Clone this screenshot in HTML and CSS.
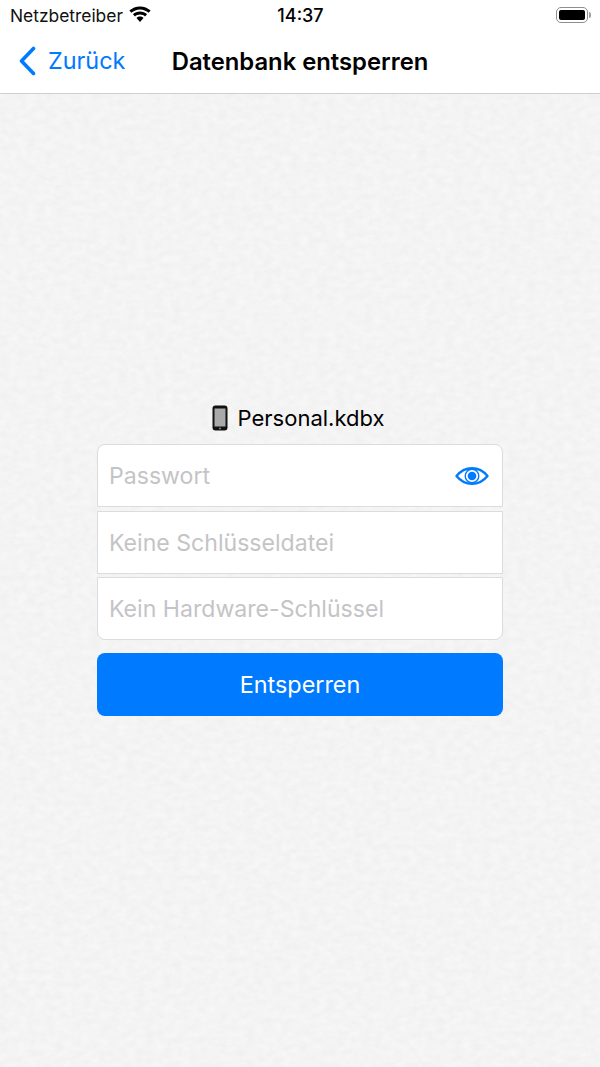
FILE: index.html
```html
<!DOCTYPE html>
<html lang="de">
<head>
    <meta charset="UTF-8">
    <meta name="viewport" content="width=device-width, initial-scale=1.0">
    <title>Datenbank entsperren</title>
    <link rel="stylesheet" href="styles.css">
</head>
<body>
    <header class="top-bar">
        <div class="status-bar">
            <div class="carrier">
                <span>Netzbetreiber</span>
                <svg class="wifi" width="24" height="17" viewBox="0 0 24 17">
                    <path d="M12 3.400c3.300 0 6.300 1.300 8.600 3.400l2.100-2.200C19.800 1.900 16.100.4 12 .4S4.200 1.900 1.300 4.600l2.100 2.200C5.700 4.700 8.700 3.400 12 3.400z"/>
                    <path d="M12 8.500c1.900 0 3.700.7 5 1.900l2.100-2.200C17.200 6.500 14.700 5.500 12 5.500S6.800 6.500 4.900 8.200L7 10.400c1.300-1.200 3.100-1.900 5-1.900z"/>
                    <path d="M12 10.600c-1.300 0-2.500.5-3.500 1.300L12 16l3.500-4.100c-1-.8-2.200-1.300-3.500-1.300z"/>
                </svg>
            </div>
            <div class="clock">14:37</div>
            <div class="battery">
                <div class="battery-body"><div class="battery-fill"></div></div>
                <div class="battery-cap"></div>
            </div>
        </div>
        <nav class="nav-bar">
            <a class="back" href="#">
                <svg width="18" height="30" viewBox="0 0 18 30">
                    <path d="M15.500 2.500 3.500 15l12 12.500" fill="none" stroke="#007aff" stroke-width="3.600" stroke-linecap="round" stroke-linejoin="round"/>
                </svg>
                <span>Zurück</span>
            </a>
            <h1 class="nav-title">Datenbank entsperren</h1>
        </nav>
    </header>

    <main class="content">
        <!-- paper texture behind the form -->
        <svg class="paper" width="100%" height="100%">
            <filter id="paper-noise" x="0" y="0" width="100%" height="100%" color-interpolation-filters="sRGB">
                <feTurbulence type="fractalNoise" baseFrequency="0.11 0.16" numOctaves="3" seed="4"/>
                <feColorMatrix type="matrix" values="0.04 0 0 0 0.935  0.04 0 0 0 0.935  0.04 0 0 0 0.935  0 0 0 0 1"/>
            </filter>
            <rect width="100%" height="100%" filter="url(#paper-noise)"/>
        </svg>
        <div class="unlock-form">
            <div class="db-name">
                <svg class="phone" width="16" height="26" viewBox="0 0 16 26">
                    <rect x="0.500" y="0.500" width="15" height="25" rx="3" fill="#111"/>
                    <rect x="2.500" y="3.500" width="11" height="18" fill="#a9a9a9"/>
                    <circle cx="8" cy="23.600" r="1" fill="#888"/>
                </svg>
                <span>Personal.kdbx</span>
            </div>
            <div class="field field-first">
                <span class="placeholder">Passwort</span>
                <svg class="eye" width="34" height="18" viewBox="0 0 34 18">
                    <path d="M1.500 9C5.500 4 11 1.200 17 1.200S28.500 4 32.500 9C28.500 14 23 16.800 17 16.800S5.500 14 1.500 9z" fill="none" stroke="#007aff" stroke-width="2.400" stroke-linejoin="round"/>
                    <circle cx="17" cy="9" r="6.800" fill="none" stroke="#007aff" stroke-width="1.400"/>
                    <circle cx="17" cy="9" r="4.300" fill="#007aff"/>
                </svg>
            </div>
            <div class="field">
                <span class="placeholder">Keine Schlüsseldatei</span>
            </div>
            <div class="field field-last">
                <span class="placeholder">Kein Hardware-Schlüssel</span>
            </div>
            <button class="unlock-btn">Entsperren</button>
        </div>
    </main>
</body>
</html>
```

FILE: styles.css
```css
html, body {
    margin: 0;
    padding: 0;
    height: 100%;
    font-family: 'Inter', 'Liberation Sans', sans-serif;
}
body {
    display: flex;
    flex-direction: column;
    background-color: #f4f4f4;
    color: #000;
}
.top-bar {
    background-color: #fff;
    border-bottom: 1px solid #cfcfcf;
    height: 93px;
    box-sizing: content-box;
}
.status-bar {
    height: 30px;
    padding: 0 9px 0 10px;
    display: grid;
    grid-template-columns: 1fr auto 1fr;
    align-items: center;
    font-size: 17.400px;
}
.carrier {
    display: flex;
    align-items: center;
    gap: 5px;
    color: #111;
}
.wifi {
    margin-top: -2px;
}
.clock {
    font-size: 18px;
    font-weight: 500;
}
.battery {
    display: flex;
    align-items: center;
    justify-content: flex-end;
}
.battery-body {
    width: 32px;
    height: 16px;
    box-sizing: border-box;
    border: 1px solid #8e8e8e;
    border-radius: 5px;
    padding: 2px;
}
.battery-fill {
    height: 100%;
    background-color: #000;
    border-radius: 2px;
}
.battery-cap {
    width: 2px;
    height: 6px;
    margin-left: 1px;
    background-color: #a0a0a0;
    border-radius: 0 2px 2px 0;
}
.nav-bar {
    height: 63px;
    position: relative;
    display: flex;
    align-items: center;
    justify-content: center;
}
.back {
    position: absolute;
    left: 18px;
    top: 16px;
    display: flex;
    align-items: center;
    gap: 12px;
    color: #007aff;
    text-decoration: none;
    font-size: 23.400px;
    line-height: 30px;
}
.nav-title {
    margin: 0;
    font-size: 23.800px;
    font-weight: 600;
}
.content {
    flex: 1;
    position: relative;
    display: flex;
    flex-direction: column;
    align-items: center;
    padding-top: 310px;
}
.paper {
    position: absolute;
    top: 0;
    left: 0;
}
.unlock-form {
    position: relative;
    width: 406px;
    display: flex;
    flex-direction: column;
}
.db-name {
    height: 28px;
    margin-bottom: 12px;
    padding-right: 4px;
    display: flex;
    align-items: center;
    justify-content: center;
    gap: 10px;
    font-size: 22px;
}
.field {
    height: 63px;
    box-sizing: border-box;
    background-color: #fff;
    border: 1px solid #dcdcdc;
    margin-bottom: 3.500px;
    padding: 1px 13px 0 11px;
    display: flex;
    align-items: center;
    justify-content: space-between;
    font-size: 23.100px;
}
.field-first {
    border-radius: 8px 8px 0 0;
}
.field-last {
    border-radius: 0 0 8px 8px;
    margin-bottom: 13px;
}
.placeholder {
    color: #c4c4c6;
}
.unlock-btn {
    height: 63px;
    border: none;
    border-radius: 8px;
    background-color: #007aff;
    color: #fff;
    font-family: inherit;
    font-size: 23.400px;
}
```
